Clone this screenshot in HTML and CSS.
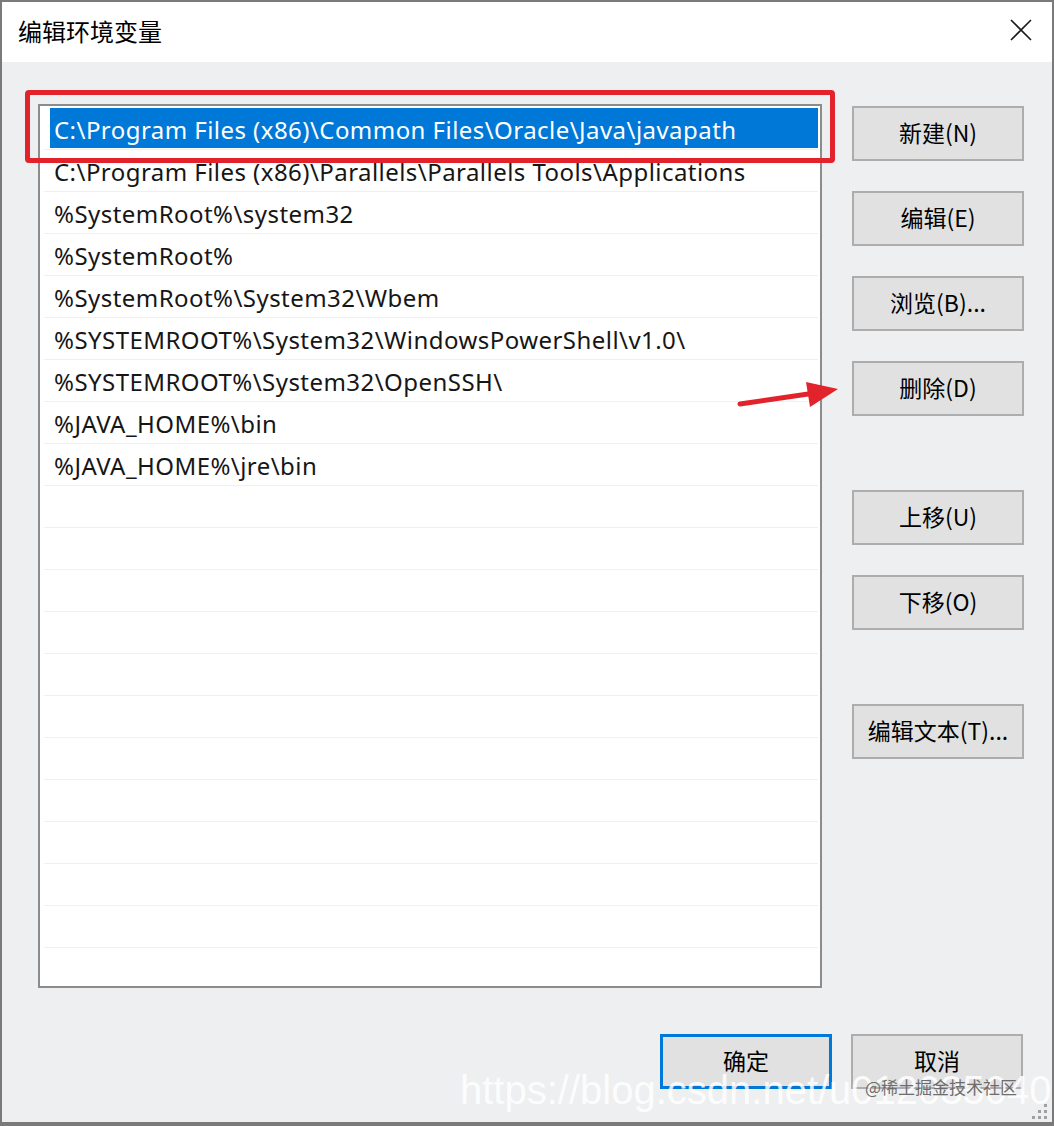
FILE: index.html
```html
<!DOCTYPE html>
<html lang="zh-CN">
<head>
  <meta charset="UTF-8" />
  <title>编辑环境变量</title>
  <link rel="stylesheet" href="styles.css">
</head>
<body>

  <div class="dialog">
    <div class="titlebar">
      <span class="title">编辑环境变量</span>
      <svg class="close" width="22" height="22" viewBox="0 0 22 22">
        <path d="M1 1 L21 21 M21 1 L1 21" stroke="#1b1b1b" stroke-width="1.6" fill="none" />
      </svg>
    </div>

    <div class="content">
      <div class="list">
        <div class="row selected"><span class="cell">C:\Program Files (x86)\Common Files\Oracle\Java\javapath</span></div>
        <div class="row"><span class="cell">C:\Program Files (x86)\Parallels\Parallels Tools\Applications</span></div>
        <div class="row"><span class="cell">%SystemRoot%\system32</span></div>
        <div class="row"><span class="cell">%SystemRoot%</span></div>
        <div class="row"><span class="cell">%SystemRoot%\System32\Wbem</span></div>
        <div class="row"><span class="cell">%SYSTEMROOT%\System32\WindowsPowerShell\v1.0\</span></div>
        <div class="row"><span class="cell">%SYSTEMROOT%\System32\OpenSSH\</span></div>
        <div class="row"><span class="cell">%JAVA_HOME%\bin</span></div>
        <div class="row"><span class="cell">%JAVA_HOME%\jre\bin</span></div>
        <div class="row"><span class="cell"></span></div>
        <div class="row"><span class="cell"></span></div>
        <div class="row"><span class="cell"></span></div>
        <div class="row"><span class="cell"></span></div>
        <div class="row"><span class="cell"></span></div>
        <div class="row"><span class="cell"></span></div>
        <div class="row"><span class="cell"></span></div>
        <div class="row"><span class="cell"></span></div>
        <div class="row"><span class="cell"></span></div>
        <div class="row"><span class="cell"></span></div>
        <div class="row"><span class="cell"></span></div>
        <div class="row"><span class="cell"></span></div>
      </div>

      <div class="side">
        <button class="btn">新建(N)</button>
        <button class="btn">编辑(E)</button>
        <button class="btn">浏览(B)...</button>
        <button class="btn">删除(D)</button>
        <button class="btn group">上移(U)</button>
        <button class="btn">下移(O)</button>
        <button class="btn group">编辑文本(T)...</button>
      </div>
    </div>

    <div class="footer">
      <button class="btn default">确定</button>
      <button class="btn">取消</button>
    </div>

    <!-- annotations drawn on top of the dialog -->
    <div class="mark-box"></div>
    <svg class="mark-arrow" width="110" height="36" viewBox="0 0 110 36">
      <path d="M5 29 L80 18" stroke="#e3232c" stroke-width="5" stroke-linecap="round" fill="none" />
      <path d="M103 14 L71 7 L75 32 Z" fill="#e3232c" />
    </svg>

    <div class="watermark">https://blog.csdn.net/u012035040</div>
    <div class="credit">@稀土掘金技术社区</div>

    <svg class="grip" width="18" height="18" viewBox="0 0 18 18">
      <g fill="#a0a0a0">
        <rect x="14" y="2" width="3" height="3" />
        <rect x="8" y="8" width="3" height="3" />
        <rect x="14" y="8" width="3" height="3" />
        <rect x="2" y="14" width="3" height="3" />
        <rect x="8" y="14" width="3" height="3" />
        <rect x="14" y="14" width="3" height="3" />
      </g>
    </svg>
  </div>

</body>
</html>
```

FILE: styles.css
```css
body {
  margin: 0;
  padding: 0;
  font-family: 'Noto Sans', 'Noto Sans CJK SC', sans-serif;
  background: #3a3a3a;
}

.dialog {
  position: relative;
  width: 1054px;
  height: 1126px;
  box-sizing: border-box;
  border: 2px solid #7a7a7a;
  border-bottom-width: 4px;
  background: #eeeff0;
  overflow: hidden;
}

.titlebar {
  height: 60px;
  box-sizing: border-box;
  background: #fff;
  display: flex;
  align-items: center;
  justify-content: space-between;
  padding: 0 20px 4px 16px;
}

.title {
  font-family: 'Noto Sans CJK SC', sans-serif;
  font-size: 24px;
  color: #000;
}

.content {
  display: flex;
  gap: 30px;
  padding: 42px 28px 0 36px;
}

.list {
  width: 784px;
  height: 884px;
  box-sizing: border-box;
  border: 2px solid #8c8c8c;
  background: #fff;
  padding: 2px 2px 0 4px;
  overflow: hidden;
}

.row {
  height: 41px;
  border-bottom: 1px solid #f0f0f0;
}

.cell {
  display: block;
  height: 40px;
  margin-left: 6px;
  padding-left: 4px;
  line-height: 44px;
  font-size: 24px;
  letter-spacing: 0.45px;
  color: #161616;
  white-space: nowrap;
  overflow: hidden;
}

.row.selected .cell {
  background: #0078d7;
  color: #fff;
}

.side {
  width: 172px;
  display: flex;
  flex-direction: column;
  gap: 30px;
  padding-top: 2px;
}

.side .group {
  margin-top: 44px;
}

.btn {
  width: 172px;
  height: 55px;
  box-sizing: border-box;
  border: 2px solid #adadad;
  background: #e1e1e1;
  font-family: 'Noto Sans CJK SC', sans-serif;
  font-size: 23px;
  color: #000;
  padding: 0 0 4px;
}

.btn.default {
  border: 3px solid #0078d7;
}

.footer {
  display: flex;
  justify-content: flex-end;
  gap: 19px;
  padding: 46px 29px 0 0;
}

.mark-box {
  position: absolute;
  left: 23px;
  top: 88px;
  width: 810px;
  height: 73px;
  box-sizing: border-box;
  border: 5px solid #e3232c;
  border-radius: 4px;
}

.mark-arrow {
  position: absolute;
  left: 733px;
  top: 373px;
}

.watermark {
  position: absolute;
  left: 458px;
  top: 1066px;
  font-family: 'Liberation Sans', sans-serif;
  font-size: 40px;
  color: rgba(255, 255, 255, 0.85);
  white-space: nowrap;
}

.credit {
  position: absolute;
  left: 863px;
  top: 1072px;
  font-family: 'Noto Sans CJK SC', sans-serif;
  font-size: 17px;
  color: #6d6d6d;
  white-space: nowrap;
}

.grip {
  position: absolute;
  right: 4px;
  bottom: 2px;
}
```
